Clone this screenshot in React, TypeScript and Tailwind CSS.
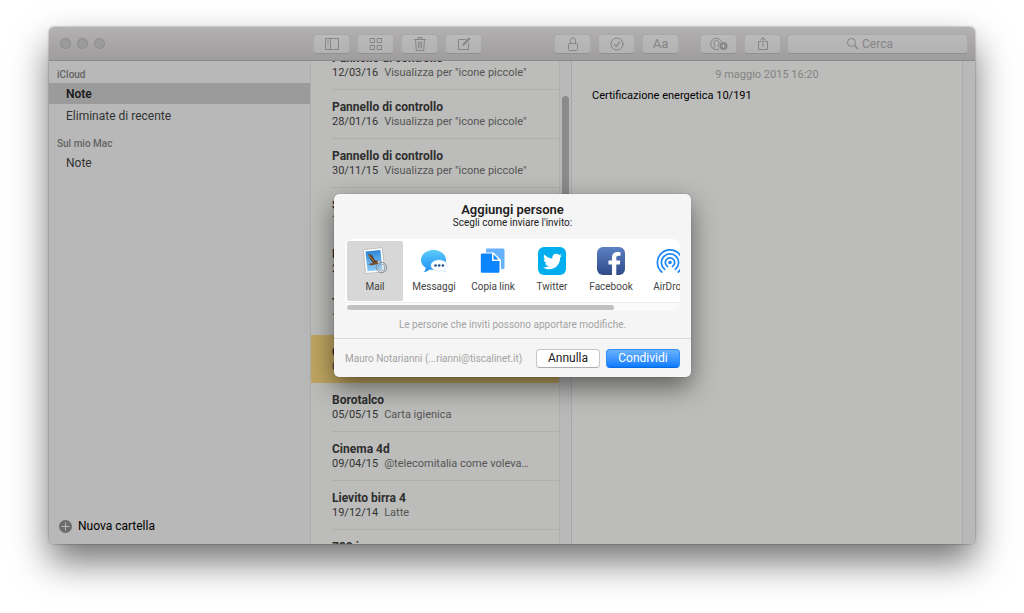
import type { ReactNode } from "react";
import { FaTwitter } from "react-icons/fa";

type Note = {
  title: string;
  date: string;
  preview: string;
  selected?: boolean;
};

const NOTES: Note[] = [
  { title: "Pannello di controllo", date: "12/03/16", preview: 'Visualizza per "icone piccole"' },
  { title: "Pannello di controllo", date: "28/01/16", preview: 'Visualizza per "icone piccole"' },
  { title: "Pannello di controllo", date: "30/11/15", preview: 'Visualizza per "icone piccole"' },
  { title: "Spesa", date: "14/10/15", preview: "Pane" },
  { title: "Indirizzi", date: "22/07/15", preview: "Milano" },
  { title: "Treni", date: "18/06/15", preview: "Orari" },
  { title: "Certificazione energetica", date: "09/05/15", preview: "10/191", selected: true },
  { title: "Borotalco", date: "05/05/15", preview: "Carta igienica" },
  { title: "Cinema 4d", date: "09/04/15", preview: "@telecomitalia come voleva…" },
  { title: "Lievito birra 4", date: "19/12/14", preview: "Latte" },
  { title: "730 iva compresa", date: "02/12/14", preview: "Modulo" },
];

function Glyph({ children }: { children: ReactNode }) {
  return (
    <svg
      width="16"
      height="16"
      viewBox="0 0 16 16"
      fill="none"
      stroke="currentColor"
      strokeLinecap="round"
      strokeLinejoin="round"
      aria-hidden="true"
    >
      {children}
    </svg>
  );
}

function ToolButton({ label, children }: { label: string; children: ReactNode }) {
  return (
    <button
      aria-label={label}
      className="grid h-[20px] w-[37px] shrink-0 place-items-center rounded-[4px] border border-[#a9a8a9] border-b-[#929192] bg-linear-to-b from-[#bbbabb] to-[#b3b2b3] text-[#868586]"
    >
      {children}
    </button>
  );
}

function Toolbar() {
  return (
    <header className="flex h-[34px] shrink-0 items-center border-b border-[#8b8a8b] bg-linear-to-b from-[#b3b1b3] to-[#9e9c9d] pr-[7px]">
      <div className="flex w-[264px] shrink-0 gap-[6px] pl-[11px]">
        {["Chiudi", "Riduci", "Ingrandisci"].map((label) => (
          <button
            key={label}
            aria-label={label}
            className="size-[11px] rounded-full border border-[#8d8c8d] bg-[#9c9b9c]"
          />
        ))}
      </div>

      <div className="flex gap-[7px]">
        <ToolButton label="Mostra cartelle">
          <Glyph>
            <rect x="1.5" y="2.5" width="13" height="11" rx="0.5" />
            <path d="M6.5 2.5v11" />
            <path d="M3.5 4.5h1M3.5 6.5h1M3.5 8.5h1" strokeWidth="0.8" />
          </Glyph>
        </ToolButton>
        <ToolButton label="Mostra allegati">
          <Glyph>
            <rect x="2.5" y="2.5" width="4" height="4" />
            <rect x="9.5" y="2.5" width="4" height="4" />
            <rect x="2.5" y="9.5" width="4" height="4" />
            <rect x="9.5" y="9.5" width="4" height="4" />
          </Glyph>
        </ToolButton>
        <ToolButton label="Elimina">
          <Glyph>
            <path d="M2.5 3.5h11M6 3.5v-2h4v2M3.5 3.5l.8 11h7.4l.8-11" />
            <path d="M6.4 6v6M8 6v6M9.6 6v6" strokeWidth="0.9" />
          </Glyph>
        </ToolButton>
        <ToolButton label="Nuova nota">
          <Glyph>
            <path d="M9.5 3.5h-7v10h10V7.5" />
            <path d="M6.5 9.5l1.8-.4 5.9-6.2-1.3-1.3L7 7.8z" fill="currentColor" strokeWidth="0.5" />
          </Glyph>
        </ToolButton>
      </div>

      <div className="ml-[72px] flex gap-[7px]">
        <ToolButton label="Blocca nota">
          <Glyph>
            <rect x="3.5" y="7.5" width="9" height="7" rx="1" />
            <path d="M5.5 7.5V4.500a2.500 2.800 0 0 1 5 0v3" />
          </Glyph>
        </ToolButton>
        <ToolButton label="Elenco puntato">
          <Glyph>
            <circle cx="8" cy="8" r="6" />
            <path d="M5.5 8.4l1.800 2 3.400-4.600" strokeWidth="1.2" />
          </Glyph>
        </ToolButton>
        <ToolButton label="Formato">
          <span className="text-[13px] leading-none">Aa</span>
        </ToolButton>
      </div>

      <div className="ml-[21px] flex gap-[7px]">
        <ToolButton label="Aggiungi persone">
          <svg width="20" height="16" viewBox="0 0 20 16" fill="none" stroke="currentColor" aria-hidden="true">
            <path d="M10 13A5.7 5.7 0 1 1 12.800 6" />
            <path d="M5 12.600c0-2 1-2 .9-3C4.600 8.100 4.500 4.300 7.500 4.300s2.900 3.800 1.600 5.300v1.500" />
            <circle cx="14.500" cy="10" r="4" fill="currentColor" stroke="none" />
            <path d="M14.500 7.800v4.400M12.300 10h4.400" stroke="#b7b6b7" />
          </svg>
        </ToolButton>
        <ToolButton label="Condividi">
          <Glyph>
            <path d="M6 5.500H3.500v8h9v-8H10M8 10V1.500M5.500 4L8 1.500 10.500 4" />
          </Glyph>
        </ToolButton>
      </div>

      <label className="ml-[6px] flex h-[20px] min-w-0 flex-1 items-center justify-center gap-[3px] rounded-[4px] border border-[#a9a8a9] border-b-[#929192] bg-linear-to-b from-[#bbbabb] to-[#b3b2b3] pr-[16px] text-[#868586]">
        <svg width="13" height="13" viewBox="0 0 13 13" fill="none" stroke="currentColor" aria-hidden="true">
          <circle cx="5.500" cy="5.500" r="4" />
          <path d="M8.500 8.500l3.500 3.500" strokeWidth="1.200" />
        </svg>
        <input
          type="text"
          aria-label="Cerca"
          placeholder="Cerca"
          className="field-sizing-content bg-transparent text-[12px] outline-none placeholder:text-[#868586]"
        />
      </label>
    </header>
  );
}

function Sidebar() {
  return (
    <nav className="flex w-[262px] shrink-0 flex-col border-r border-[#aeaeae] bg-[#b8b8b8] text-[12px] text-[#333]">
      <h2 className="mt-[5px] h-[17px] pl-[8px] text-[10px] leading-[17px] font-medium text-[#636363]">iCloud</h2>
      <button className="h-[21px] bg-[#9b9b9b] pl-[17px] text-left font-semibold text-[#1a1a1a]">Note</button>
      <button className="mt-[1px] h-[21px] pl-[17px] text-left">Eliminate di recente</button>
      <h2 className="mt-[9px] h-[17px] pl-[8px] text-[10px] leading-[17px] font-medium text-[#636363]">
        Sul mio Mac
      </h2>
      <button className="h-[21px] pl-[17px] text-left">Note</button>

      <button className="mt-auto mb-[9px] flex items-center gap-[6px] pl-[10px] text-black">
        <svg width="13" height="13" viewBox="0 0 13 13" aria-hidden="true">
          <circle cx="6.500" cy="6.500" r="6.500" fill="#6b6b6b" />
          <path d="M6.500 2.500v8M2.500 6.500h8" stroke="#b8b8b8" />
        </svg>
        Nuova cartella
      </button>
    </nav>
  );
}

function NoteList() {
  return (
    <div className="flex w-[261px] shrink-0 overflow-hidden border-r border-[#a9a9a9] bg-[#bcbcba]">
      <ul className="-mt-[20px] min-w-0 flex-1">
        {NOTES.map((n, i) => (
          <li key={i} className={`pl-[21px] ${n.selected ? "bg-[#bfa560]" : ""}`}>
            {/* the selected row has no divider, so it is one pixel shorter */}
            <button
              className={`block w-full text-left whitespace-nowrap ${
                n.selected ? "h-[48px]" : "h-[49px] border-b border-[#afafad]"
              }`}
            >
              <span className="block text-[12px] leading-[15px] font-bold text-[#2e2e2e]">{n.title}</span>
              <span className="flex gap-[6px] text-[11px] leading-[14px]">
                <span className="text-[#333]">{n.date}</span>
                <span className="text-[#555]">{n.preview}</span>
              </span>
            </button>
          </li>
        ))}
      </ul>
      <div className="w-[12px] shrink-0 border-l border-[#b0b0b0] bg-[#b9b9b9] pt-[35px]">
        <div className="mx-auto h-[120px] w-[7px] rounded-full bg-[#8b8b8b]" />
      </div>
    </div>
  );
}

function MailIcon() {
  return (
    <svg width="28" height="28" viewBox="0 0 28 28" aria-hidden="true">
      <defs>
        <linearGradient id="sky" x1="0" y1="0" x2="0" y2="1">
          <stop offset="0" stopColor="#2f86da" />
          <stop offset="1" stopColor="#8ccbf7" />
        </linearGradient>
      </defs>
      <g transform="rotate(-6 14 14)">
        <rect
          x="3.500"
          y="1.500"
          width="19"
          height="24"
          rx="0.800"
          fill="#fff"
          stroke="#9d9d9d"
          strokeWidth="0.700"
          strokeDasharray="1.600 0.600"
        />
        <rect x="5.500" y="3.500" width="15" height="20" fill="url(#sky)" />
        <path d="M8 6l1.500 1 .3-.8 1.400 2 .5-.5 2 5.300 2.800 1.200-1 2-3-.4C9.800 13.500 8.300 10 8 6z" fill="#5a3d24" />
        <path d="M8.800 7.500c1 2.200 2 4.500 4 6.200" stroke="#c08f52" fill="none" strokeWidth="0.900" />
        <path d="M7 16.500c2.500-.2 4-1.500 6-1.700l3.500-.8 2.800 1.500-.8 1.300-3 .4c-3 1-6 1-8.500-.7z" fill="#76502c" />
        <path d="M17 14.200l2.300 1.200-.8 1.300-2-.4z" fill="#f3e6cf" />
      </g>
      <circle cx="20.500" cy="20.500" r="5.200" fill="#c7d3dd" fillOpacity="0.350" stroke="#6e7780" strokeOpacity="0.700" />
      <circle cx="20.500" cy="20.500" r="3.400" fill="none" stroke="#7d868e" strokeWidth="0.700" opacity="0.800" />
    </svg>
  );
}

function MessagesIcon() {
  return (
    <svg width="28" height="28" viewBox="0 0 28 28" aria-hidden="true">
      <defs>
        <linearGradient id="bubble" x1="0" y1="0" x2="0" y2="1">
          <stop offset="0" stopColor="#5ccbfb" />
          <stop offset="1" stopColor="#1c8df5" />
        </linearGradient>
      </defs>
      <path
        d="M13.500 3C6.500 3 1 7.500 1 13c0 3.200 1.800 6 4.800 7.800-.2 1.800-1 3.200-2.300 4.200 2.500 0 4.500-1 6-2.500 1.300.3 2.600.5 4 .5C20.500 23 26 18.500 26 13S20.500 3 13.500 3z"
        fill="url(#bubble)"
      />
      <path
        d="M19 13c-4.600 0-8 2.400-8 5.500S14.400 24 19 24c1 0 2-.1 2.900-.4 1 .9 2.300 1.400 3.800 1.400-.7-.7-1.100-1.500-1.200-2.500 1.600-1 2.500-2.400 2.500-4 0-3.100-3.400-5.500-8-5.500z"
        fill="#fff"
        stroke="#b9dbf5"
        strokeWidth="0.600"
      />
      <g fill="#1d4f8f">
        <circle cx="15.500" cy="18.500" r="1.300" />
        <circle cx="19.200" cy="18.500" r="1.300" />
        <circle cx="22.900" cy="18.500" r="1.300" />
      </g>
    </svg>
  );
}

function CopyLinkIcon() {
  return (
    <svg width="28" height="28" viewBox="0 0 28 28" aria-hidden="true">
      <path d="M8 1.500h16a1.500 1.500 0 0 1 1.500 1.500v18a1 1 0 0 1-1 1H7V2.500a1 1 0 0 1 1-1z" fill="#66b2ff" />
      <path d="M1 5.500h13.500l7.500 7.500v14H1z" fill="#fff" />
      <path
        d="M3 6.500h10v7.500h7.500v10.500a1.200 1.200 0 0 1-1.200 1.200H3a1.200 1.200 0 0 1-1.200-1.200V7.700A1.200 1.200 0 0 1 3 6.500z"
        fill="#0a84ff"
      />
      <path d="M14.500 7.500l5 5h-5z" fill="#0a84ff" />
    </svg>
  );
}

function TwitterIcon() {
  return (
    <span className="grid size-[28px] place-items-center rounded-[6px] bg-[#03aeee] text-white">
      <FaTwitter size={19} />
    </span>
  );
}

function FacebookIcon() {
  return (
    <svg width="28" height="28" viewBox="0 0 28 28" aria-hidden="true">
      <defs>
        <linearGradient id="fb" x1="0" y1="0" x2="0" y2="1">
          <stop offset="0" stopColor="#5b80c4" />
          <stop offset="1" stopColor="#2f4b88" />
        </linearGradient>
      </defs>
      <rect width="28" height="28" rx="6" fill="url(#fb)" />
      <path
        d="M15 28V17.500h-3.500v-4H15v-3C15 7 17 5 20.500 5c1.400 0 2.500.1 3 .2v3.600h-2c-1.700 0-2.200.8-2.200 2.100v2.600h4l-.5 4h-3.500V28z"
        fill="#fff"
      />
    </svg>
  );
}

function AirDropIcon() {
  return (
    <svg
      width="28"
      height="28"
      viewBox="0 0 28 28"
      fill="none"
      stroke="#1a85f5"
      strokeWidth="1.700"
      strokeLinecap="round"
      aria-hidden="true"
    >
      <circle cx="14" cy="15.500" r="1.800" fill="#1a85f5" stroke="none" />
      <path d="M11.500 19.500A4.700 4.700 0 1 1 16.500 19.500" />
      <path d="M8.700 22.300A8.600 8.600 0 1 1 19.300 22.300" />
      <path d="M5.700 25A12.600 12.600 0 1 1 22.300 25" />
    </svg>
  );
}

const SERVICES = [
  { name: "Mail", icon: <MailIcon />, active: true },
  { name: "Messaggi", icon: <MessagesIcon /> },
  { name: "Copia link", icon: <CopyLinkIcon /> },
  { name: "Twitter", icon: <TwitterIcon /> },
  { name: "Facebook", icon: <FacebookIcon /> },
  { name: "AirDrop", icon: <AirDropIcon /> },
];

function ShareDialog() {
  return (
    <div
      role="dialog"
      aria-labelledby="share-title"
      className="w-[357px] rounded-[5px] bg-[#f5f5f5] shadow-[0_10px_26px_rgba(0,0,0,0.5),0_0_1px_rgba(0,0,0,0.5)]"
    >
      <div className="px-[11px] pt-[8px] text-center">
        <h1 id="share-title" className="text-[13px] leading-[15px] font-semibold text-[#222]">
          Aggiungi persone
        </h1>
        <p className="text-[10px] leading-[12px] text-[#222]">Scegli come inviare l'invito:</p>

        <div className="mt-[10px] overflow-hidden rounded-[8px] bg-white">
          <div className="flex gap-[3px] p-[2px] pb-[1px]">
            {SERVICES.map((s) => (
              <button
                key={s.name}
                className={`flex h-[60px] w-[56px] shrink-0 flex-col items-center gap-[5px] rounded-[2px] pt-[6px] text-[10px] leading-[14px] whitespace-nowrap text-[#444] ${
                  s.active ? "bg-[#d7d7d7]" : ""
                }`}
              >
                {s.icon}
                {s.name}
              </button>
            ))}
          </div>
          <div className="border-t border-[#ececec] bg-[#fafafa] px-[2px] pt-[2px] pb-[1px]">
            <div className="h-[5px] w-[267px] rounded-full bg-[#c1c1c1]" />
          </div>
        </div>

        <p className="mt-[7px] pb-[6px] text-[10px] leading-[14px] text-[#a3a3a3]">
          Le persone che inviti possono apportare modifiche.
        </p>
      </div>

      <footer className="flex h-[39px] items-center border-t border-[#d9d9d9] px-[11px] text-[12px]">
        <span className="flex-1 text-[10px] whitespace-nowrap text-[#a3a3a3]">
          Mauro Notarianni (...rianni@tiscalinet.it)
        </span>
        <button className="h-[19px] w-[64px] rounded-[4px] border border-[#c6c6c6] border-b-[#adadad] bg-white leading-none text-[#222]">
          Annulla
        </button>
        <button className="ml-[6px] h-[19px] w-[74px] rounded-[4px] border border-[#2f8ff5] border-b-[#0a69e0] bg-linear-to-b from-[#67b2fb] to-[#067bff] leading-none text-white">
          Condividi
        </button>
      </footer>
    </div>
  );
}

export default function App() {
  return (
    <div className="flex h-screen bg-white pt-[27px] pr-[49px] pb-[69px] pl-[49px] font-['Roboto','Liberation_Sans',sans-serif]">
      <div className="relative flex min-w-0 flex-1 flex-col rounded-[5px] shadow-[0_18px_36px_rgba(0,0,0,0.55),0_0_2px_rgba(0,0,0,0.5)]">
        <div className="flex min-h-0 flex-1 flex-col overflow-hidden rounded-[5px]">
          <Toolbar />
          <div className="flex min-h-0 flex-1">
            <Sidebar />
            <NoteList />
            <main className="flex min-w-0 flex-1 bg-[#bcbcba]">
              <article className="min-w-0 flex-1 pl-[20px] text-[11px] text-black">
                <time className="mt-[6px] block pr-[20px] text-center leading-[15px] text-[#838383]">
                  9 maggio 2015 16:20
                </time>
                <p className="mt-[6px] leading-[15px]">Certificazione energetica 10/191</p>
              </article>
              <div className="w-[13px] border-l border-[#adadad] bg-[#b9b9b9]" />
            </main>
          </div>
        </div>

        <div className="absolute inset-x-0 top-[167px] flex justify-center pl-[1px]">
          <ShareDialog />
        </div>
      </div>
    </div>
  );
}
